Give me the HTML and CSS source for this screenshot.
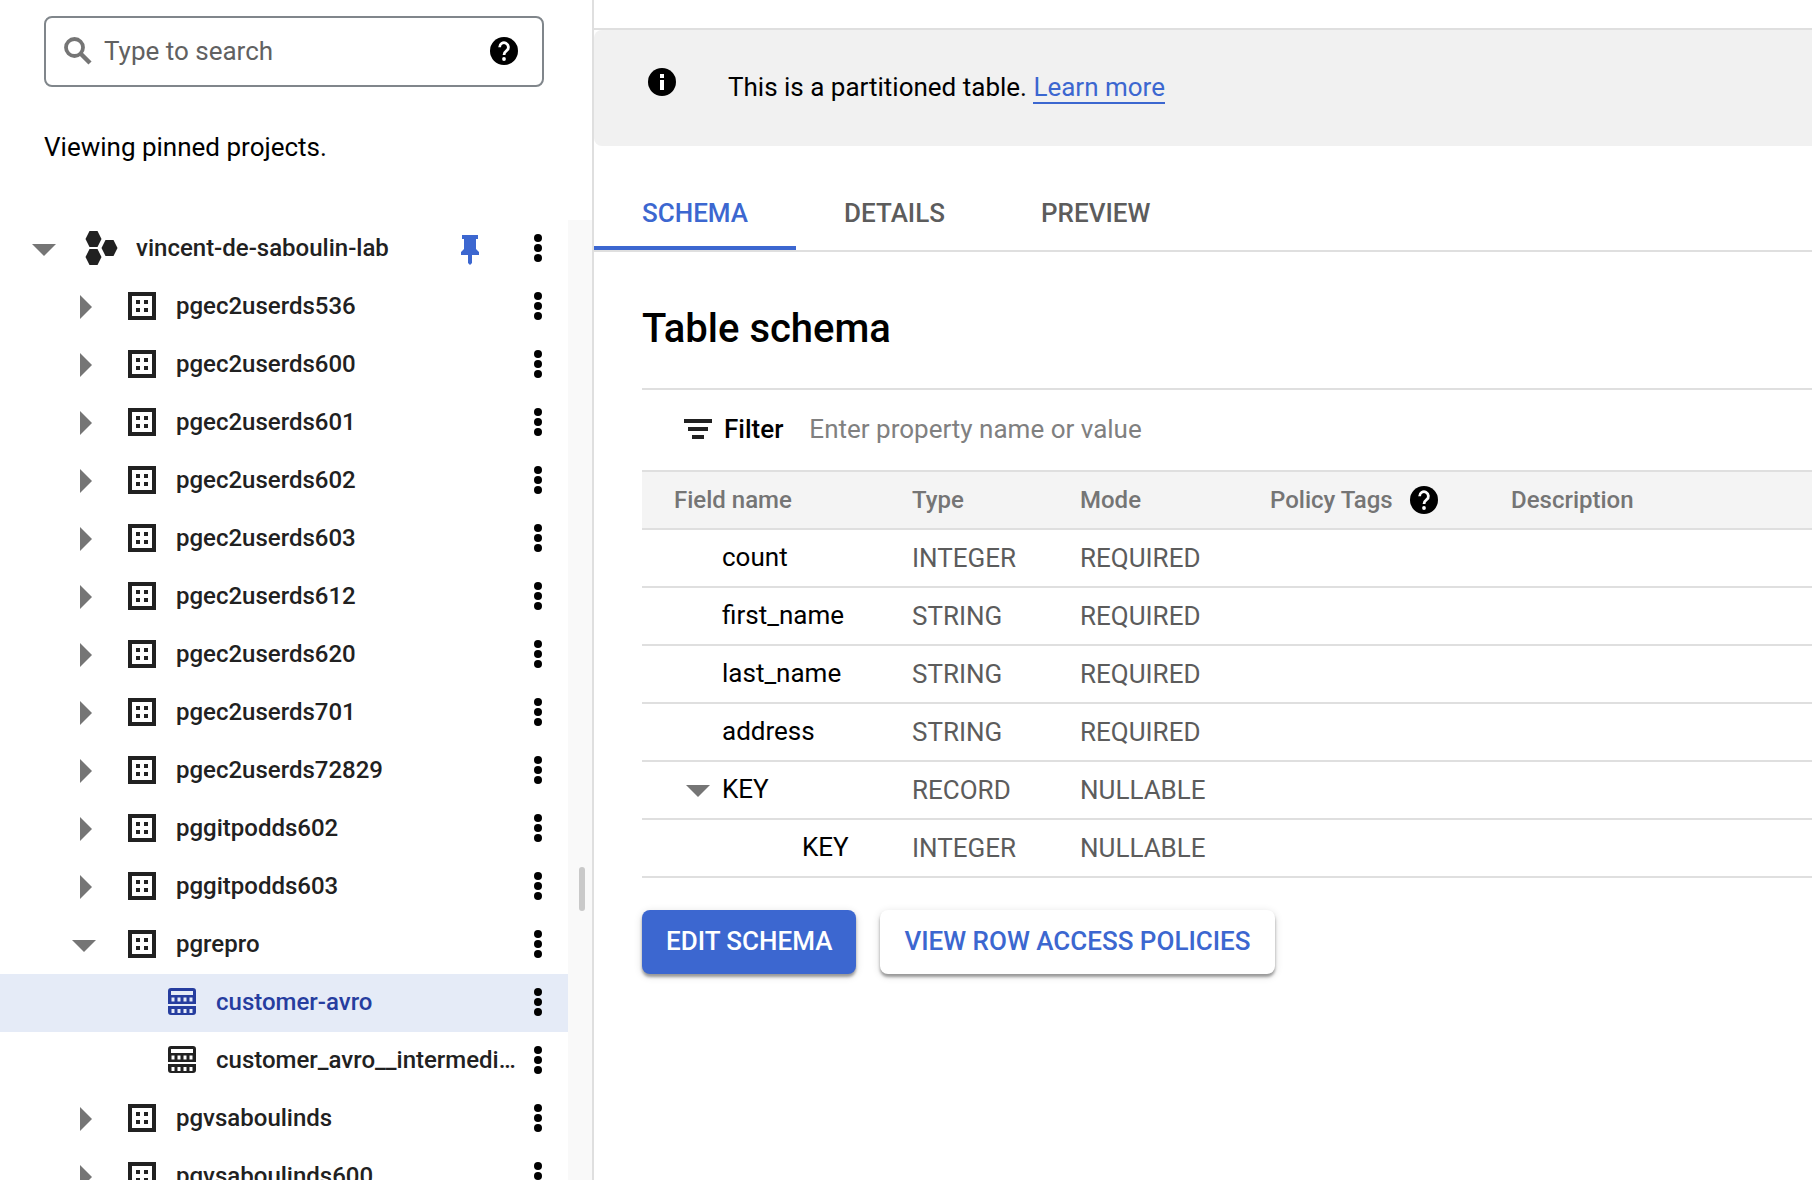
FILE: index.html
```html
<!DOCTYPE html>
<html lang="en">
<head>
<meta charset="utf-8">
<title>customer-avro</title>
<link rel="stylesheet" href="styles.css">
</head>
<body>
<svg class="sprite" aria-hidden="true">
  <symbol id="help" viewBox="0 0 28 28"><circle cx="14" cy="14" r="14"/><path d="M9.600 10.200a4.400 4.400 0 1 1 7 3.500c-1.600 1.200-2.600 2-2.600 4.300" fill="none" stroke="#fff" stroke-width="2.800"/><circle cx="14" cy="22" r="1.900" fill="#fff"/></symbol>
  <symbol id="info" viewBox="0 0 28 28"><circle cx="14" cy="14" r="14"/><path d="M12 6h4v4h-4zM12 12h4v10h-4z" fill="#fff"/></symbol>
  <symbol id="search" viewBox="0 0 28 28"><circle cx="10.500" cy="10.500" r="8.500" fill="none" stroke="currentColor" stroke-width="3.800"/><path d="M16.500 16.500L26 26" stroke="currentColor" stroke-width="4.400"/></symbol>
  <symbol id="down" viewBox="0 0 24 24"><path d="M0 7h24L12 19z"/></symbol>
  <symbol id="right" viewBox="0 0 24 24"><path d="M8 0l12 12L8 24z"/></symbol>
  <symbol id="project" viewBox="0 0 34 34"><path d="M4.500 0h8l4 8-4 8h-8l-4-8zM20.500 9h8l4 8-4 8h-8l-4-8zM4.500 18h8l4 8-4 8h-8l-4-8z"/></symbol>
  <symbol id="dataset" viewBox="0 0 28 28"><path fill-rule="evenodd" d="M0 0h28v28H0zM4 4v20h20V4z"/><path d="M8 8h4v4H8zM16 8h4v4h-4zM8 16h4v4H8zM16 16h4v4h-4z"/></symbol>
  <symbol id="table" viewBox="0 0 28 28"><path fill-rule="evenodd" d="M3 0h22a3 3 0 0 1 3 3v13H0V3a3 3 0 0 1 3-3zM3 3v4h22V3zM3.500 9.500v4h3v-4zM9.500 9.500v4h3v-4zM15.500 9.500v4h3v-4zM21.500 9.500v4h3v-4zM0 18h28v6a3 3 0 0 1-3 3H3a3 3 0 0 1-3-3zM3.500 21v4h3v-4zM9.500 21v4h3v-4zM15.500 21v4h3v-4zM21.500 21v4h3v-4z"/></symbol>
  <symbol id="dots" viewBox="0 0 8 28"><circle cx="4" cy="4" r="4"/><circle cx="4" cy="14" r="4"/><circle cx="4" cy="24" r="4"/></symbol>
  <symbol id="pin" viewBox="0 0 18 30"><path d="M1 0h16v4h-2v10l3 3v3h-7v8l-2 2-2-2v-8H0v-3l3-3V4H1z"/></symbol>
  <symbol id="filter" viewBox="0 0 28 20"><path d="M0 0h28v4H0zM4 8h20v4H4zM8 16h12v4H8z"/></symbol>
</svg>
<div class="app">
  <aside class="explorer">
    <div class="explorer-head">
      <div class="search">
        <svg class="icon search-icon"><use href="#search"/></svg>
        <input type="text" placeholder="Type to search" aria-label="Type to search">
        <button class="plain" aria-label="Search help"><svg class="icon"><use href="#help"/></svg></button>
      </div>
      <p class="viewing">Viewing pinned projects.</p>
    </div>
    <div class="tree-scroll">
      <ul class="tree">
        <li class="row project"><button class="plain toggle" aria-label="Collapse"><svg><use href="#down"/></svg></button><svg class="project-icon"><use href="#project"/></svg><span class="name">vincent-de-saboulin-lab</span><button class="plain pin" aria-label="Unpin"><svg><use href="#pin"/></svg></button><button class="plain more" aria-label="Actions"><svg><use href="#dots"/></svg></button></li>
        <li class="row"><button class="plain toggle" aria-label="Expand"><svg><use href="#right"/></svg></button><svg class="icon"><use href="#dataset"/></svg><span class="name">pgec2userds536</span><button class="plain more" aria-label="Actions"><svg><use href="#dots"/></svg></button></li>
        <li class="row"><button class="plain toggle" aria-label="Expand"><svg><use href="#right"/></svg></button><svg class="icon"><use href="#dataset"/></svg><span class="name">pgec2userds600</span><button class="plain more" aria-label="Actions"><svg><use href="#dots"/></svg></button></li>
        <li class="row"><button class="plain toggle" aria-label="Expand"><svg><use href="#right"/></svg></button><svg class="icon"><use href="#dataset"/></svg><span class="name">pgec2userds601</span><button class="plain more" aria-label="Actions"><svg><use href="#dots"/></svg></button></li>
        <li class="row"><button class="plain toggle" aria-label="Expand"><svg><use href="#right"/></svg></button><svg class="icon"><use href="#dataset"/></svg><span class="name">pgec2userds602</span><button class="plain more" aria-label="Actions"><svg><use href="#dots"/></svg></button></li>
        <li class="row"><button class="plain toggle" aria-label="Expand"><svg><use href="#right"/></svg></button><svg class="icon"><use href="#dataset"/></svg><span class="name">pgec2userds603</span><button class="plain more" aria-label="Actions"><svg><use href="#dots"/></svg></button></li>
        <li class="row"><button class="plain toggle" aria-label="Expand"><svg><use href="#right"/></svg></button><svg class="icon"><use href="#dataset"/></svg><span class="name">pgec2userds612</span><button class="plain more" aria-label="Actions"><svg><use href="#dots"/></svg></button></li>
        <li class="row"><button class="plain toggle" aria-label="Expand"><svg><use href="#right"/></svg></button><svg class="icon"><use href="#dataset"/></svg><span class="name">pgec2userds620</span><button class="plain more" aria-label="Actions"><svg><use href="#dots"/></svg></button></li>
        <li class="row"><button class="plain toggle" aria-label="Expand"><svg><use href="#right"/></svg></button><svg class="icon"><use href="#dataset"/></svg><span class="name">pgec2userds701</span><button class="plain more" aria-label="Actions"><svg><use href="#dots"/></svg></button></li>
        <li class="row"><button class="plain toggle" aria-label="Expand"><svg><use href="#right"/></svg></button><svg class="icon"><use href="#dataset"/></svg><span class="name">pgec2userds72829</span><button class="plain more" aria-label="Actions"><svg><use href="#dots"/></svg></button></li>
        <li class="row"><button class="plain toggle" aria-label="Expand"><svg><use href="#right"/></svg></button><svg class="icon"><use href="#dataset"/></svg><span class="name">pggitpodds602</span><button class="plain more" aria-label="Actions"><svg><use href="#dots"/></svg></button></li>
        <li class="row"><button class="plain toggle" aria-label="Expand"><svg><use href="#right"/></svg></button><svg class="icon"><use href="#dataset"/></svg><span class="name">pggitpodds603</span><button class="plain more" aria-label="Actions"><svg><use href="#dots"/></svg></button></li>
        <li class="row"><button class="plain toggle" aria-label="Collapse"><svg><use href="#down"/></svg></button><svg class="icon"><use href="#dataset"/></svg><span class="name">pgrepro</span><button class="plain more" aria-label="Actions"><svg><use href="#dots"/></svg></button></li>
        <li class="row leaf selected"><svg class="icon"><use href="#table"/></svg><span class="name">customer-avro</span><button class="plain more" aria-label="Actions"><svg><use href="#dots"/></svg></button></li>
        <li class="row leaf"><svg class="icon"><use href="#table"/></svg><span class="name">customer_avro__intermediate</span><button class="plain more" aria-label="Actions"><svg><use href="#dots"/></svg></button></li>
        <li class="row"><button class="plain toggle" aria-label="Expand"><svg><use href="#right"/></svg></button><svg class="icon"><use href="#dataset"/></svg><span class="name">pgvsaboulinds</span><button class="plain more" aria-label="Actions"><svg><use href="#dots"/></svg></button></li>
        <li class="row"><button class="plain toggle" aria-label="Expand"><svg><use href="#right"/></svg></button><svg class="icon"><use href="#dataset"/></svg><span class="name">pgvsaboulinds600</span><button class="plain more" aria-label="Actions"><svg><use href="#dots"/></svg></button></li>
      </ul>
      <div class="track"><div class="thumb"></div></div>
    </div>
  </aside>
  <main class="detail">
    <div class="banner-wrap">
      <div class="banner">
        <svg class="icon"><use href="#info"/></svg>
        <p>This is a partitioned table. <a href="#">Learn more</a></p>
      </div>
    </div>
    <nav class="tabs">
      <button class="tab active">SCHEMA</button>
      <button class="tab">DETAILS</button>
      <button class="tab">PREVIEW</button>
    </nav>
    <section class="schema">
      <h1>Table schema</h1>
      <div class="filter">
        <svg class="filter-icon"><use href="#filter"/></svg>
        <label for="filter-input">Filter</label>
        <input id="filter-input" type="text" placeholder="Enter property name or value">
      </div>
      <table>
        <colgroup><col class="c-name"><col class="c-type"><col class="c-mode"><col class="c-tags"><col></colgroup>
        <thead>
          <tr><th>Field name</th><th>Type</th><th>Mode</th><th><span class="with-help">Policy Tags <button class="plain" aria-label="Policy tags help"><svg class="icon"><use href="#help"/></svg></button></span></th><th>Description</th></tr>
        </thead>
        <tbody>
          <tr><td class="field">count</td><td>INTEGER</td><td>REQUIRED</td><td></td><td></td></tr>
          <tr><td class="field">first_name</td><td>STRING</td><td>REQUIRED</td><td></td><td></td></tr>
          <tr><td class="field">last_name</td><td>STRING</td><td>REQUIRED</td><td></td><td></td></tr>
          <tr><td class="field">address</td><td>STRING</td><td>REQUIRED</td><td></td><td></td></tr>
          <tr><td class="field parent"><span class="expandable"><button class="plain toggle" aria-label="Collapse"><svg><use href="#down"/></svg></button>KEY</span></td><td>RECORD</td><td>NULLABLE</td><td></td><td></td></tr>
          <tr><td class="field child">KEY</td><td>INTEGER</td><td>NULLABLE</td><td></td><td></td></tr>
        </tbody>
      </table>
      <div class="actions">
        <button class="btn primary">EDIT SCHEMA</button>
        <button class="btn">VIEW ROW ACCESS POLICIES</button>
      </div>
    </section>
  </main>
</div>
</body>
</html>
```
FILE: styles.css
```css
* { box-sizing: border-box; }

body {
  margin: 0;
  background: #fff;
  color: #000;
  font: 400 26px/32px Roboto, "Liberation Sans", sans-serif;
}

p, h1, ul { margin: 0; padding: 0; }
svg { display: block; flex: none; fill: currentColor; }
.sprite { position: absolute; width: 0; height: 0; }
.icon { width: 28px; height: 28px; }

button, input { font: inherit; }
input { min-width: 0; flex: 1; padding: 0; border: 0; outline: 0; background: none; }
.plain { flex: none; padding: 0; border: 0; background: none; color: inherit; }

.app { display: flex; height: 100vh; overflow: hidden; }

/* Explorer panel */
.explorer {
  display: flex;
  flex: none;
  flex-direction: column;
  width: 594px;
  border-right: 2px solid #dfdfdf;
}
.explorer-head { padding: 16px 48px 57px 44px; }
.search {
  display: flex;
  align-items: center;
  height: 71px;
  padding: 0 24px 2px 18px;
  border: 2px solid #80868b;
  border-radius: 8px;
}
.search-icon { margin-right: 12px; color: #757575; }
.search input::placeholder { color: #616161; opacity: 1; }
.viewing { margin-top: 44px; }

.tree-scroll { display: flex; flex: 1; min-height: 0; }
.tree { flex: 1; min-width: 0; overflow: hidden; list-style: none; }
.row {
  display: flex;
  align-items: center;
  height: 58px;
  padding: 0 26px 2px 72px;
  color: #212121;
  font-size: 24px;
  font-weight: 500;
}
.row .icon { margin: 0 20px 0 32px; }
.row.project { padding-left: 32px; }
.row.leaf { padding-left: 136px; }
.toggle { padding-top: 2px; color: #757575; }
.toggle svg { width: 24px; height: 24px; }
.project-icon { width: 34px; height: 34px; margin: 0 17px 0 29px; }
.name { flex: 1; min-width: 0; overflow: hidden; text-overflow: ellipsis; white-space: nowrap; }
.pin { padding-top: 4px; margin-right: 39px; color: #3c67d0; }
.pin svg { width: 18px; height: 30px; }
.more { margin-left: 16px; color: #000; }
.more svg { width: 8px; height: 28px; }
.selected { background: #e5ebf7; color: #263d9f; }

.track { flex: none; width: 24px; padding: 647px 7px 0 11px; background: #f9f9f9; }
.thumb { height: 44px; border-radius: 3px; background: #c9c9c9; }

/* Table details */
.detail { flex: 1; min-width: 0; padding-top: 28px; }
.banner-wrap { border-top: 2px solid #dfdfdf; }
.banner {
  display: flex;
  gap: 52px;
  padding: 38px 54px 43px;
  border-radius: 8px 0 0 8px;
  background: #f1f1f1;
}
.banner p { padding-top: 3px; }
.banner a { border-bottom: 2px solid #3c67d0; color: #3c67d0; text-decoration: none; }

.tabs { display: flex; margin-top: 28px; border-bottom: 2px solid #dfdfdf; }
.tab {
  height: 76px;
  padding: 6px 48px 0;
  border: 0;
  border-bottom: 4px solid transparent;
  background: none;
  color: #5c5c5c;
  font-weight: 500;
}
.tab.active { border-color: #3c67d0; color: #3c67d0; }

.schema { padding-left: 48px; }
h1 { padding: 53px 0 35px; font-size: 40px; font-weight: 500; line-height: 48px; }
.filter {
  display: flex;
  align-items: center;
  height: 82px;
  padding: 0 0 2px 42px;
  border-top: 2px solid #dfdfdf;
}
.filter-icon { width: 28px; height: 20px; margin-right: 12px; color: #212121; }
.filter label { margin-right: 26px; font-weight: 500; }
.filter input::placeholder { color: #808080; opacity: 1; }

table { width: 100%; border-collapse: separate; border-spacing: 0; table-layout: fixed; border-top: 2px solid #dfdfdf; }
.c-name { width: 238px; }
.c-type { width: 168px; }
.c-mode { width: 190px; }
.c-tags { width: 241px; }
th, td { height: 58px; padding: 0 0 0 32px; border-bottom: 2px solid #dfdfdf; text-align: left; }
th { background: #f4f4f4; color: #757575; font-size: 24px; font-weight: 500; }
td { color: #5c5c5c; }
.with-help { display: flex; align-items: center; gap: 17px; }
.with-help button { color: #000; }
.field { padding-bottom: 2px; padding-left: 80px; color: #000; }
.field.parent { padding-left: 44px; }
.field.child { padding-left: 160px; }
.expandable { display: flex; align-items: center; gap: 12px; }

.actions { display: flex; gap: 24px; padding-top: 32px; }
.btn {
  height: 64px;
  padding: 0 24px 2px;
  border: 0;
  border-radius: 8px;
  background: #fff;
  box-shadow: 0 3px 3px rgba(0, 0, 0, .35), 0 2px 8px rgba(0, 0, 0, .14);
  color: #3c67d0;
  font-weight: 500;
}
.btn.primary { background: #3c67d0; color: #fff; }
```
